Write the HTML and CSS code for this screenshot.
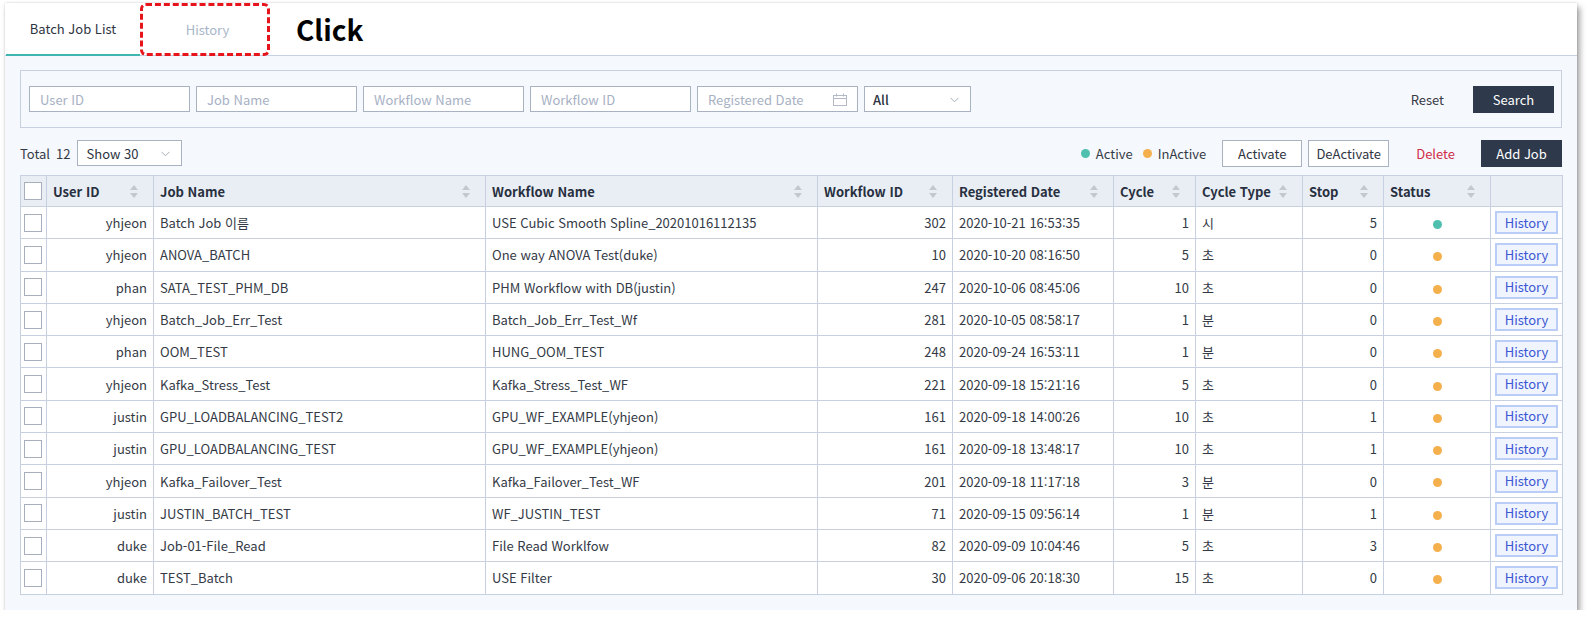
FILE: index.html
```html
<!DOCTYPE html>
<html lang="ko">
<head>
<meta charset="utf-8">
<title>Batch Job List</title>
<link rel="stylesheet" href="styles.css">
</head>
<body>
<div class="panel">
  <div class="tabbar">
    <div class="tab active">Batch Job List</div>
    <div class="tab hist">History</div>
    <div class="click">Click</div>
  </div>
  <div class="content">
    <div class="filter">
      <div class="inputs">
        <div class="inp">User ID</div>
        <div class="inp">Job Name</div>
        <div class="inp">Workflow Name</div>
        <div class="inp">Workflow ID</div>
        <div class="inp date">Registered Date
          <svg class="cal" width="14" height="13" viewBox="0 0 14 13"><rect x="0.5" y="2.5" width="13" height="10" fill="none" stroke="#b3bac6"/><line x1="0.5" y1="5.5" x2="13.5" y2="5.5" stroke="#b3bac6"/><line x1="3.5" y1="0.5" x2="3.5" y2="3.5" stroke="#b3bac6"/><line x1="10.5" y1="0.5" x2="10.5" y2="3.5" stroke="#b3bac6"/></svg>
        </div>
        <div class="sel all">All<svg class="chev" width="9" height="6" viewBox="0 0 9 6"><polyline points="0.5,0.8 4.5,4.8 8.5,0.8" fill="none" stroke="#a6aebb"/></svg></div>
      </div>
      <div class="actions">
        <span class="reset">Reset</span>
        <button class="btn dark">Search</button>
      </div>
    </div>
    <div class="toolbar">
      <div class="left">
        <span class="total">Total</span><span class="count">12</span>
        <div class="sel show">Show 30<svg class="chev" width="9" height="6" viewBox="0 0 9 6"><polyline points="0.5,0.8 4.5,4.8 8.5,0.8" fill="none" stroke="#a6aebb"/></svg></div>
      </div>
      <div class="right">
        <span class="legend"><i class="dot on"></i>Active</span>
        <span class="legend"><i class="dot off"></i>InActive</span>
        <button class="btn light">Activate</button>
        <button class="btn light">DeActivate</button>
        <span class="del">Delete</span>
        <button class="btn dark">Add Job</button>
      </div>
    </div>
    <table class="grid">
      <colgroup>
        <col style="width:26px"><col style="width:107px"><col style="width:332px"><col style="width:332px"><col style="width:135px"><col style="width:161px"><col style="width:82px"><col style="width:107px"><col style="width:81px"><col style="width:107px"><col style="width:72px">
      </colgroup>
      <thead>
        <tr>
          <th class="chk"><span class="box"></span></th>
          <th><div class="hd">User ID<span class="sort"></span></div></th>
          <th><div class="hd">Job Name<span class="sort"></span></div></th>
          <th><div class="hd">Workflow Name<span class="sort"></span></div></th>
          <th><div class="hd">Workflow ID<span class="sort"></span></div></th>
          <th><div class="hd">Registered Date<span class="sort"></span></div></th>
          <th><div class="hd">Cycle<span class="sort"></span></div></th>
          <th><div class="hd">Cycle Type<span class="sort"></span></div></th>
          <th><div class="hd">Stop<span class="sort"></span></div></th>
          <th><div class="hd">Status<span class="sort"></span></div></th>
          <th></th>
        </tr>
      </thead>
      <tbody>
        <tr><td class="chk"><span class="box"></span></td><td class="r">yhjeon</td><td>Batch Job 이름</td><td>USE Cubic Smooth Spline_20201016112135</td><td class="r">302</td><td>2020-10-21 16:53:35</td><td class="r">1</td><td>시</td><td class="r">5</td><td class="c"><i class="dot on"></i></td><td class="c"><button class="hbtn">History</button></td></tr>
        <tr><td class="chk"><span class="box"></span></td><td class="r">yhjeon</td><td>ANOVA_BATCH</td><td>One way ANOVA Test(duke)</td><td class="r">10</td><td>2020-10-20 08:16:50</td><td class="r">5</td><td>초</td><td class="r">0</td><td class="c"><i class="dot off"></i></td><td class="c"><button class="hbtn">History</button></td></tr>
        <tr><td class="chk"><span class="box"></span></td><td class="r">phan</td><td>SATA_TEST_PHM_DB</td><td>PHM Workflow with DB(justin)</td><td class="r">247</td><td>2020-10-06 08:45:06</td><td class="r">10</td><td>초</td><td class="r">0</td><td class="c"><i class="dot off"></i></td><td class="c"><button class="hbtn">History</button></td></tr>
        <tr><td class="chk"><span class="box"></span></td><td class="r">yhjeon</td><td>Batch_Job_Err_Test</td><td>Batch_Job_Err_Test_Wf</td><td class="r">281</td><td>2020-10-05 08:58:17</td><td class="r">1</td><td>분</td><td class="r">0</td><td class="c"><i class="dot off"></i></td><td class="c"><button class="hbtn">History</button></td></tr>
        <tr><td class="chk"><span class="box"></span></td><td class="r">phan</td><td>OOM_TEST</td><td>HUNG_OOM_TEST</td><td class="r">248</td><td>2020-09-24 16:53:11</td><td class="r">1</td><td>분</td><td class="r">0</td><td class="c"><i class="dot off"></i></td><td class="c"><button class="hbtn">History</button></td></tr>
        <tr><td class="chk"><span class="box"></span></td><td class="r">yhjeon</td><td>Kafka_Stress_Test</td><td>Kafka_Stress_Test_WF</td><td class="r">221</td><td>2020-09-18 15:21:16</td><td class="r">5</td><td>초</td><td class="r">0</td><td class="c"><i class="dot off"></i></td><td class="c"><button class="hbtn">History</button></td></tr>
        <tr><td class="chk"><span class="box"></span></td><td class="r">justin</td><td>GPU_LOADBALANCING_TEST2</td><td>GPU_WF_EXAMPLE(yhjeon)</td><td class="r">161</td><td>2020-09-18 14:00:26</td><td class="r">10</td><td>초</td><td class="r">1</td><td class="c"><i class="dot off"></i></td><td class="c"><button class="hbtn">History</button></td></tr>
        <tr><td class="chk"><span class="box"></span></td><td class="r">justin</td><td>GPU_LOADBALANCING_TEST</td><td>GPU_WF_EXAMPLE(yhjeon)</td><td class="r">161</td><td>2020-09-18 13:48:17</td><td class="r">10</td><td>초</td><td class="r">1</td><td class="c"><i class="dot off"></i></td><td class="c"><button class="hbtn">History</button></td></tr>
        <tr><td class="chk"><span class="box"></span></td><td class="r">yhjeon</td><td>Kafka_Failover_Test</td><td>Kafka_Failover_Test_WF</td><td class="r">201</td><td>2020-09-18 11:17:18</td><td class="r">3</td><td>분</td><td class="r">0</td><td class="c"><i class="dot off"></i></td><td class="c"><button class="hbtn">History</button></td></tr>
        <tr><td class="chk"><span class="box"></span></td><td class="r">justin</td><td>JUSTIN_BATCH_TEST</td><td>WF_JUSTIN_TEST</td><td class="r">71</td><td>2020-09-15 09:56:14</td><td class="r">1</td><td>분</td><td class="r">1</td><td class="c"><i class="dot off"></i></td><td class="c"><button class="hbtn">History</button></td></tr>
        <tr><td class="chk"><span class="box"></span></td><td class="r">duke</td><td>Job-01-File_Read</td><td>File Read Worklfow</td><td class="r">82</td><td>2020-09-09 10:04:46</td><td class="r">5</td><td>초</td><td class="r">3</td><td class="c"><i class="dot off"></i></td><td class="c"><button class="hbtn">History</button></td></tr>
        <tr><td class="chk"><span class="box"></span></td><td class="r">duke</td><td>TEST_Batch</td><td>USE Filter</td><td class="r">30</td><td>2020-09-06 20:18:30</td><td class="r">15</td><td>초</td><td class="r">0</td><td class="c"><i class="dot off"></i></td><td class="c"><button class="hbtn">History</button></td></tr>
      </tbody>
    </table>
  </div>
</div>
</body>
</html>
```

FILE: styles.css
```css
* { box-sizing: border-box; }
html, body { margin: 0; padding: 0; background: #ffffff; }
body {
  font-family: "Noto Sans CJK KR", "Noto Sans", sans-serif;
  font-size: 13px;
  color: #343a46;
  padding: 3px 0 0 5px;
  font-feature-settings: "calt" 0;
  font-variant-ligatures: none;
}
.panel {
  width: 1572px;
  height: 607px;
  background: #f5f8fc;
  box-shadow: 0 0 2px rgba(0,0,0,0.18), 3px 4px 6px rgba(0,0,0,0.35);
  display: flex;
  flex-direction: column;
}
.tabbar {
  height: 53px;
  background: #ffffff;
  border-bottom: 1px solid #c6d0df;
  display: flex;
  align-items: stretch;
  padding-left: 1px;
}
.tab {
  display: flex;
  align-items: center;
  justify-content: center;
  font-size: 13px;
}
.tab.active {
  width: 134px;
  color: #2f3542;
  border-bottom: 2px solid #3fb6b2;
  margin-bottom: -1px;
}
.tab.hist {
  width: 130px;
  color: #a9b5c8;
  border: 3px dashed #e8141c;
  border-radius: 6px;
  margin-bottom: -1px;
  padding-left: 5px;
}
.click {
  display: flex;
  align-items: center;
  margin-left: 26px;
  font-size: 28px;
  font-weight: 700;
  color: #000;
  padding-bottom: 1px;
}
.content {
  padding: 14px 15px 0 15px;
  display: flex;
  flex-direction: column;
}
.filter {
  height: 58px;
  border: 1px solid #c6d0df;
  display: flex;
  align-items: center;
  justify-content: space-between;
  padding: 0 7px 0 8px;
}
.inputs { display: flex; gap: 6px; }
.inp, .sel {
  height: 26px;
  width: 161px;
  border: 1px solid #a9b2c1;
  background: #fff;
  color: #a7b1c3;
  padding-left: 10px;
  display: flex;
  align-items: center;
  position: relative;
  font-size: 13px;
}
.date .cal { position: absolute; right: 10px; top: 6px; }
.sel { color: #2c3340; }
.sel.all { width: 107px; font-weight: 500; padding-left: 8px; }
.chev { position: absolute; right: 11px; top: 10px; }
.actions { display: flex; align-items: center; gap: 29px; }
.reset { color: #353b47; }
.btn {
  font-family: inherit;
  font-size: 13px;
  height: 27px;
  width: 81px;
  border: 1px solid #a9b2c1;
  background: #fff;
  color: #2f3542;
  padding: 0;
  cursor: pointer;
}
.btn.dark { background: #2e394c; border-color: #2e394c; color: #fff; }
.toolbar {
  margin-top: 11px;
  height: 28px;
  display: flex;
  align-items: center;
  justify-content: space-between;
}
.toolbar .left { display: flex; align-items: center; }
.total { margin-right: 6px; }
.count { margin-right: 6px; }
.sel.show { width: 105px; padding-left: 9px; }
.toolbar .right { display: flex; align-items: center; }
.legend { display: flex; align-items: center; margin-right: 10px; color: #353b47; }
.legend .dot { margin-right: 6px; }
.legend + .legend { margin-right: 16px; }
.btn.light { width: 80px; margin-right: 6px; }
.btn.light + .btn.light { width: 81px; margin-right: 27px; }
.del { color: #cf2e4a; margin-right: 26px; }
.dot {
  display: inline-block;
  width: 9px;
  height: 9px;
  border-radius: 50%;
}
.dot.on { background: #4fc0b0; }
.dot.off { background: #f5b04e; }
.grid {
  margin-top: 8px;
  width: 1542px;
  table-layout: fixed;
  border-collapse: collapse;
  background: #fff;
}
.grid th, .grid td {
  border: 1px solid #c7d0e1;
  padding: 0 6px;
  white-space: nowrap;
  overflow: hidden;
}
.grid th {
  height: 31px;
  background: #e9eef5;
  text-align: left;
  font-weight: 700;
  color: #283040;
}
.grid td { height: 32.3px; color: #343a46; }
.hd { display: flex; align-items: center; justify-content: space-between; padding-right: 8px; }
.sort {
  display: inline-flex;
  flex-direction: column;
  gap: 3px;
  width: 9px;
  flex: none;
}
.sort::before, .sort::after {
  content: "";
  display: block;
  width: 0; height: 0;
  border-left: 4.5px solid transparent;
  border-right: 4.5px solid transparent;
}
.sort::before { border-bottom: 5px solid #c3c7ce; }
.sort::after { border-top: 5px solid #c3c7ce; }
.grid .chk { padding: 0 0 0 3px; }
.box {
  display: block;
  width: 18px;
  height: 18px;
  border: 1px solid #a8afbc;
  background: #fff;
}
.r { text-align: right; }
.c { text-align: center; }
.grid td.c { padding: 0; }
.grid td.c .dot { vertical-align: middle; }
.hbtn {
  font-family: inherit;
  font-size: 13px;
  width: 63px;
  height: 23px;
  padding: 0;
  border: 2px solid #b9cdf7;
  background: #eff4ff;
  color: #3c57d2;
  margin-left: 4px;
  display: block;
  line-height: 18px;
}
```
